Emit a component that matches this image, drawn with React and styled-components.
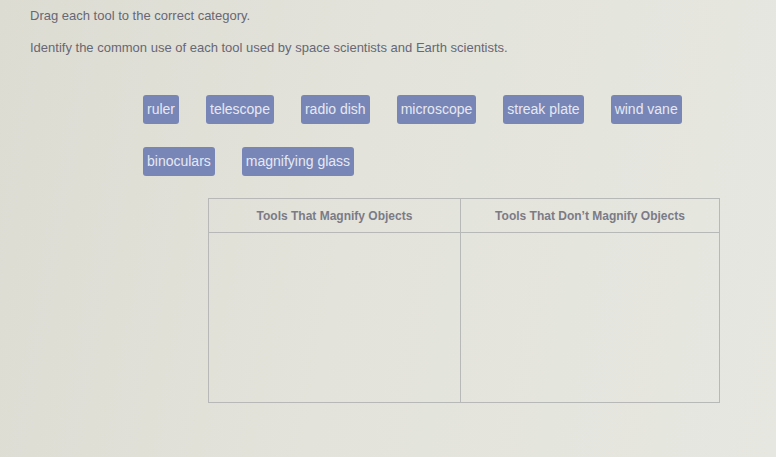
import React from "react";
import styled, { createGlobalStyle } from "styled-components";

const Global = createGlobalStyle`
  html, body { margin: 0; padding: 0; }
  body {
    width: 776px; height: 457px; overflow: hidden;
    background: linear-gradient(100deg, #dcdcd3 0%, #e3e3db 45%, #e6e7e0 100%);
    font-family: "Liberation Sans", Arial, sans-serif;
  }
`;

const Page = styled.div`
  padding: 8px 0 0 30px;
  display: flex;
  flex-direction: column;
`;

const Prompt = styled.p`
  margin: 0;
  font-size: 13px;
  line-height: 15px;
  color: #676775;
  margin-bottom: ${(p) => p.$after || 0}px;
`;

const Bank = styled.div`
  margin-left: 113px;
  display: flex;
  flex-direction: column;
  gap: 23px;
`;

const ChipRow = styled.div`
  display: flex;
  gap: 27px;
`;

const Chip = styled.div`
  background: #7885b7;
  color: #e6e9f2;
  font-size: 14px;
  line-height: 29px;
  height: 29px;
  padding: 0 4px;
  border-radius: 3px;
  white-space: nowrap;
`;

const Table = styled.div`
  margin: 22px 0 0 178px;
  width: 510px;
  height: 203px;
  border: 1px solid #b7b8b8;
  display: grid;
  grid-template-columns: 252px 1fr;
  grid-template-rows: 34px 1fr;
`;

const Head = styled.div`
  display: flex;
  align-items: center;
  justify-content: center;
  font-size: 12px;
  font-weight: bold;
  color: #7b7b86;
  border-bottom: 1px solid #b7b8b8;
  border-right: ${(p) => (p.$left ? "1px solid #b7b8b8" : "none")};
`;

const Cell = styled.div`
  border-right: ${(p) => (p.$left ? "1px solid #b7b8b8" : "none")};
`;

const row1 = ["ruler", "telescope", "radio dish", "microscope", "streak plate", "wind vane"];
const row2 = ["binoculars", "magnifying glass"];

export default function App() {
  return (
    <>
      <Global />
      <Page>
        <Prompt $after={17}>Drag each tool to the correct category.</Prompt>
        <Prompt $after={40}>
          Identify the common use of each tool used by space scientists and Earth scientists.
        </Prompt>
        <Bank>
          <ChipRow>
            {row1.map((t) => (
              <Chip key={t}>{t}</Chip>
            ))}
          </ChipRow>
          <ChipRow>
            {row2.map((t) => (
              <Chip key={t}>{t}</Chip>
            ))}
          </ChipRow>
        </Bank>
        <Table>
          <Head $left>Tools That Magnify Objects</Head>
          <Head>Tools That Don’t Magnify Objects</Head>
          <Cell $left />
          <Cell />
        </Table>
      </Page>
    </>
  );
}
